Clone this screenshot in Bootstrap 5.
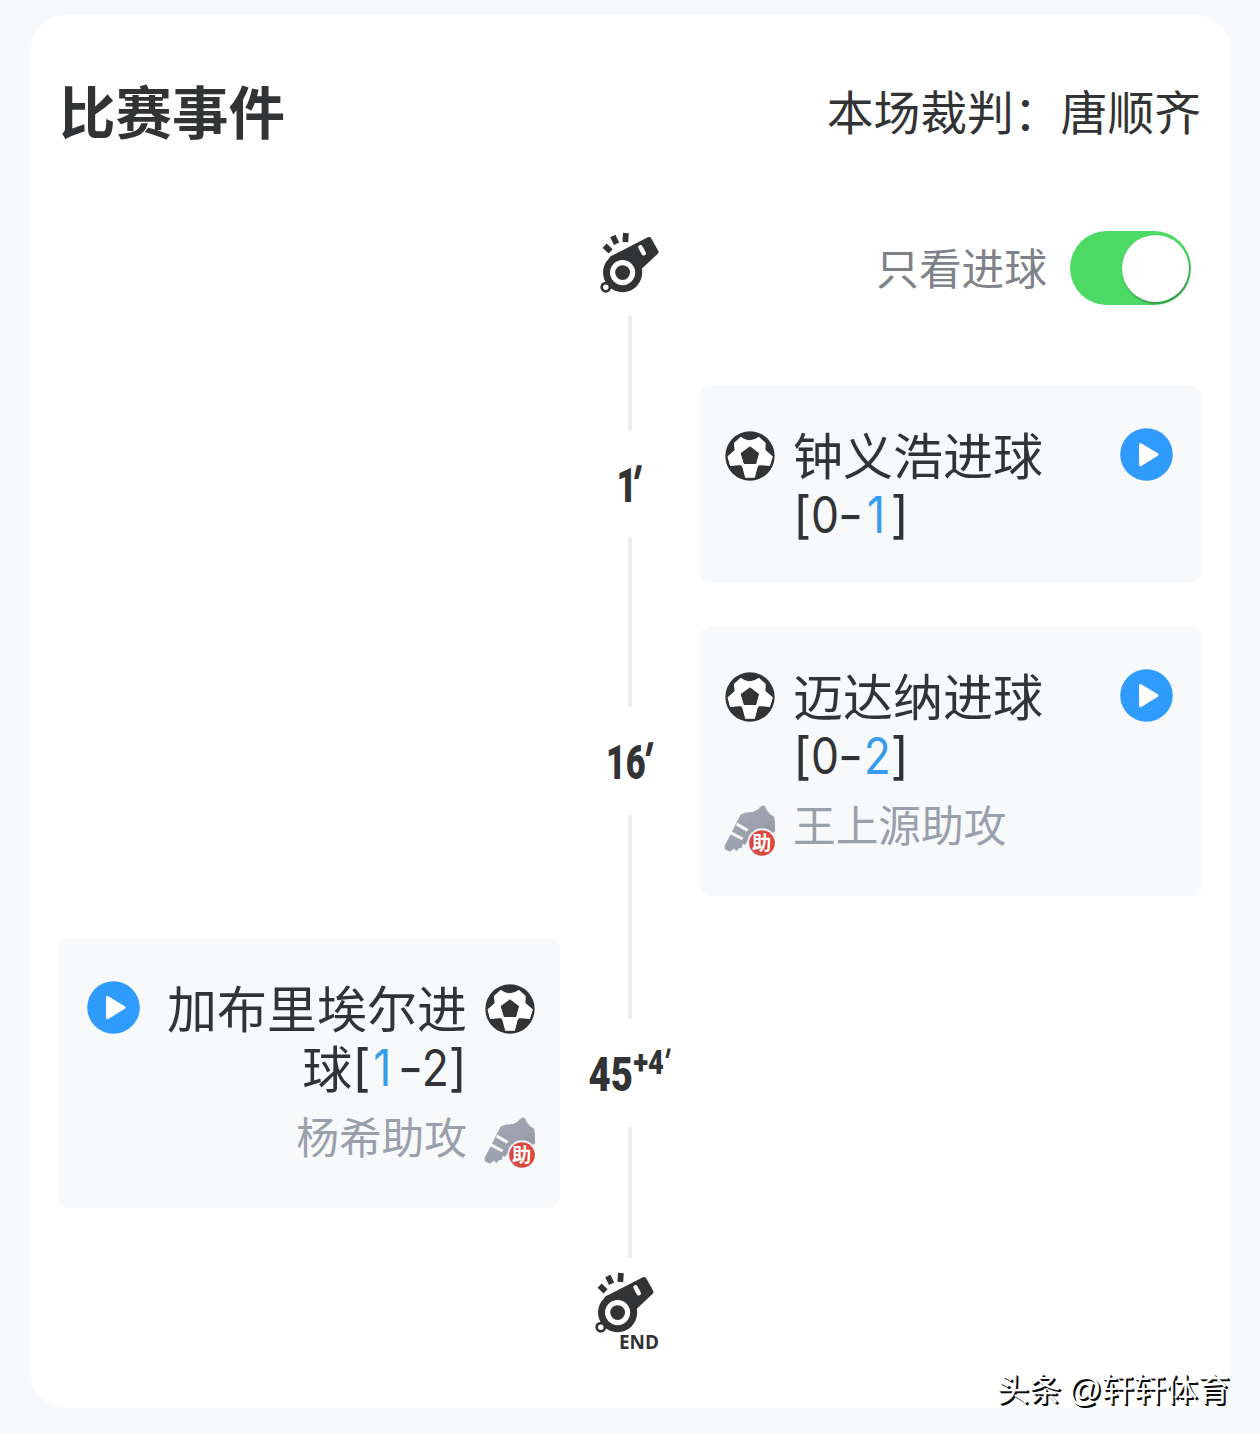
<!DOCTYPE html>
<html lang="zh-CN">
<head>
<meta charset="utf-8">
<meta name="viewport" content="width=device-width, initial-scale=1">
<title>比赛事件</title>
<link rel="stylesheet" href="https://cdn.jsdelivr.net/npm/bootstrap@5.3.0/dist/css/bootstrap.min.css">
<style>
body{background:#f8f9fc;color:#323334;font-family:"Noto Sans CJK SC",sans-serif;height:1434px;overflow:hidden}
.panel{width:1201px;height:1393px;margin:15px 0 0 30px;padding:64px 29px 0 28px;border-radius:36px}
.head{height:60px;margin-bottom:81px;padding:0 1px 0 1px}
.head h1{font-size:56.5px;line-height:60px}
.referee{font-size:46.8px;line-height:60px;padding-top:1px}
.side{width:502px;flex:none}
.axis{width:140px;flex:none}
.kickoff{height:96px}
.only{font-size:42.7px;line-height:60px;color:#808289;margin:0 23px 4px 0}
.toggle{width:121px;height:74px;background:#4cd964;padding:3px 2px 3px 3px;margin-right:11px}
.knob{width:67px;height:67px;box-shadow:1px 2px 2px rgba(0,60,10,.4)}
.first{padding:69px 0 21px}
.mid{padding:22px 0 21px}
.last{padding:21px 0 50px}
.first .axis{margin:-69px 0 -21px}
.mid .axis{margin:-22px 0 -21px}
.last .axis{margin:-21px 0 -50px}
.seg{width:4px;background:#ededed;flex:1 1 0}
.first .seg:first-child{flex-basis:48px}
.mid .seg:first-child{flex-basis:1px}
.last .seg:last-child{flex-basis:29px}
.minute{width:140px;height:108px;flex:none;font-family:Roboto,sans-serif;font-weight:900;font-size:49px;fill:#323334}
.event{background:#f7f9fb;border-radius:12px;padding:38px 29px 40px 25px}
.event.home{padding:38px 25px 40px 29px}
.line-a{gap:18px}
.goal{font-size:50px;line-height:60px}
.score{font-family:Inter,sans-serif;font-size:50.5px;line-height:0;vertical-align:2px}
.blue{color:#379ce9}
.dg,.dash{display:inline-block;text-align:center;white-space:nowrap}
.dg{width:28px;text-indent:-2px;transform:scaleX(.88)}
.dg.blue{width:28px;text-indent:0}
.dash{width:23px;text-indent:0;transform:scaleX(1.1)}
.home .dg.blue{width:28px;text-indent:-6px}
.home .dg{width:27px;text-indent:-2px}
.assist{font-size:42.7px;line-height:60px;color:#9a9fac;gap:18px;padding:9px 0 3px}
.ball{width:50px;height:50px;margin:8px 0 0;flex:none}
.boot{width:52px;height:52px;margin:0 -1px;position:relative;top:8px;flex:none}
.play{width:53px;height:53px;margin:5px .5px 0 -.5px;flex:none}
.home .play{margin:5px 0 0 0}
.watermark{position:absolute;left:997px;top:1365px;font-size:32px;line-height:44px;color:#fff;text-shadow:1px 1px 0 #0a0a0a,2px 2px 0 #0a0a0a;white-space:nowrap}
.watermark .at{font-family:"Liberation Sans",sans-serif;font-size:33px}
</style>
<script src="https://cdn.jsdelivr.net/npm/bootstrap@5.3.0/dist/js/bootstrap.bundle.min.js"></script>
</head>
<body>
<svg width="0" height="0" class="position-absolute">
  <defs>
    <linearGradient id="bootfill" x1="0" y1="0" x2="1" y2="1"><stop offset="0" stop-color="#a9aeb8"/><stop offset="1" stop-color="#8f96a3"/></linearGradient>
    <symbol id="whistle" viewBox="0 0 100 100">
      <path fill="#323334" stroke="#323334" stroke-linejoin="round" stroke-width="5" d="M32 38.5 69 19.5 76 32 59 48 44 60Z"/>
      <circle cx="42.6" cy="52.6" r="19.6" fill="#323334"/>
      <path d="M24.600 25.600 30.600 31.400M32.800 16 36.600 23.700M45.900 13 45.300 22" stroke="#323334" stroke-width="5.800" fill="none"/>
      <path d="M60.500 27.300 63.700 33.200" stroke="#fff" stroke-width="4.500" stroke-linecap="round"/>
      <circle cx="42.600" cy="52.600" r="10" fill="#323334" stroke="#fff" stroke-width="5.200"/>
      <circle cx="25.800" cy="67.200" r="4.100" fill="#fff" stroke="#323334" stroke-width="2.700"/>
    </symbol>
    <symbol id="football" viewBox="34 35 148 148">
      <circle cx="108" cy="109" r="73" fill="#323334"/>
      <path fill="#fff" stroke="#fff" stroke-width="3" stroke-linejoin="round" d="M62 71 81 54 Q96 64 108 64 Q120 64 134 54L153 71 152 92 174 111 166 137 134 134 129 142 121 172 95 172 87 142 82 134 50 137 43 111 64 92Z"/>
      <path fill="#323334" stroke="#323334" stroke-width="3" stroke-linejoin="round" d="M108 82 133 101 125 131 91 131 82 101Z"/>
    </symbol>
    <symbol id="shoe" viewBox="28 30 156 156">
      <path fill="url(#bootfill)" stroke="url(#bootfill)" stroke-width="3" stroke-linejoin="round" d="M79 59 95 54Q118 55 130 44L140 34 149 33 156 47Q163 59 178 67L180 110 103 130 91 148 83 145 80 158 72 158 66 166 57 160 46 168 33 163Q28 156 35 145L50 117Z"/>
      <path d="M66 87 99 106M46 112 84 132" stroke="#f7f9fb" stroke-width="9"/>
      <circle cx="142" cy="144" r="44" fill="#f7f9fb"/>
      <circle cx="142" cy="144" r="38.500" fill="#da4840"/>
      <text x="141" y="165" font-size="58" font-weight="700" text-anchor="middle" fill="#fff" font-family="Noto Sans CJK SC, sans-serif">助</text>
    </symbol>
    <symbol id="playbtn" viewBox="0 0 53 53">
      <circle cx="26.500" cy="26.500" r="26.300" fill="#2f9bfd"/>
      <path d="M20.500 16.500 37 26.500 20.500 36.700Z" fill="#fff" stroke="#fff" stroke-width="3" stroke-linejoin="round"/>
    </symbol>
  </defs>
</svg>

<main class="panel bg-white d-flex flex-column">
  <header class="head d-flex justify-content-between align-items-center">
    <h1 class="fw-bold m-0">比赛事件</h1>
    <div class="referee">本场裁判：唐顺齐</div>
  </header>

  <div class="kickoff d-flex">
    <div class="side"></div>
    <div class="axis d-flex justify-content-center"><svg width="100" height="100"><use href="#whistle"/></svg></div>
    <div class="side d-flex align-items-center justify-content-end">
      <span class="only">只看进球</span>
      <div class="toggle rounded-pill d-flex justify-content-end align-items-center" role="switch" aria-checked="true"><div class="knob bg-white rounded-circle"></div></div>
    </div>
  </div>

  <section class="first d-flex">
    <div class="side"></div>
    <div class="axis d-flex flex-column align-items-center">
      <div class="seg"></div>
      <svg class="minute" viewBox="0 0 140 108"><text transform="translate(56.500 71.500) scale(.72 1)">1</text><text transform="translate(76 72) skewX(-12) scale(.85 1)" x="-9">'</text></svg>
      <div class="seg"></div>
    </div>
    <div class="side event">
      <div class="line-a d-flex align-items-start">
        <svg class="ball"><use href="#football"/></svg>
        <div class="goal flex-fill">钟义浩进球<br><span class="score">[<span class="dg">0</span><span class="dash">-</span><span class="dg blue">1</span>]</span></div>
        <svg class="play"><use href="#playbtn"/></svg>
      </div>
    </div>
  </section>

  <section class="mid d-flex">
    <div class="side"></div>
    <div class="axis d-flex flex-column align-items-center">
      <div class="seg"></div>
      <svg class="minute" viewBox="0 0 140 108"><text transform="translate(46 71.500) scale(.7 1)">16</text><text transform="translate(87.500 72) skewX(-12) scale(.85 1)" x="-9">'</text></svg>
      <div class="seg"></div>
    </div>
    <div class="side event">
      <div class="line-a d-flex align-items-start">
        <svg class="ball"><use href="#football"/></svg>
        <div class="goal flex-fill">迈达纳进球<br><span class="score">[<span class="dg">0</span><span class="dash">-</span><span class="dg blue">2</span>]</span></div>
        <svg class="play"><use href="#playbtn"/></svg>
      </div>
      <div class="assist d-flex align-items-center"><svg class="boot"><use href="#shoe"/></svg><span>王上源助攻</span></div>
    </div>
  </section>

  <section class="last d-flex">
    <div class="side event home">
      <div class="line-a d-flex flex-row-reverse align-items-start">
        <svg class="ball"><use href="#football"/></svg>
        <div class="goal flex-fill text-end">加布里埃尔进<br>球<span class="score">[<span class="dg blue">1</span><span class="dash">-</span><span class="dg">2</span>]</span></div>
        <svg class="play"><use href="#playbtn"/></svg>
      </div>
      <div class="assist d-flex flex-row-reverse align-items-center"><svg class="boot"><use href="#shoe"/></svg><span>杨希助攻</span></div>
    </div>
    <div class="axis d-flex flex-column align-items-center">
      <div class="seg"></div>
      <svg class="minute" viewBox="0 0 140 108"><text transform="translate(28.500 71.500) scale(.78 1)">45</text><text transform="translate(73.500 55) scale(.8 1)" style="font-size:34px">+4</text><text transform="translate(107 55) skewX(-12) scale(.8 1)" x="-7" style="font-size:34px">'</text></svg>
      <div class="seg"></div>
    </div>
    <div class="side"></div>
  </section>

  <div class="d-flex justify-content-center">
    <svg width="100" height="100" viewBox="0 0 100 100">
      <use href="#whistle" x="-5" y="2" width="100" height="100"/>
      <text x="39" y="91" font-family="Open Sans, sans-serif" font-weight="700" font-size="19" textLength="40" lengthAdjust="spacingAndGlyphs" fill="#323334">END</text>
    </svg>
  </div>
</main>
<div class="watermark">头条 <span class="at">@</span>轩轩体育</div>
</body>
</html>
